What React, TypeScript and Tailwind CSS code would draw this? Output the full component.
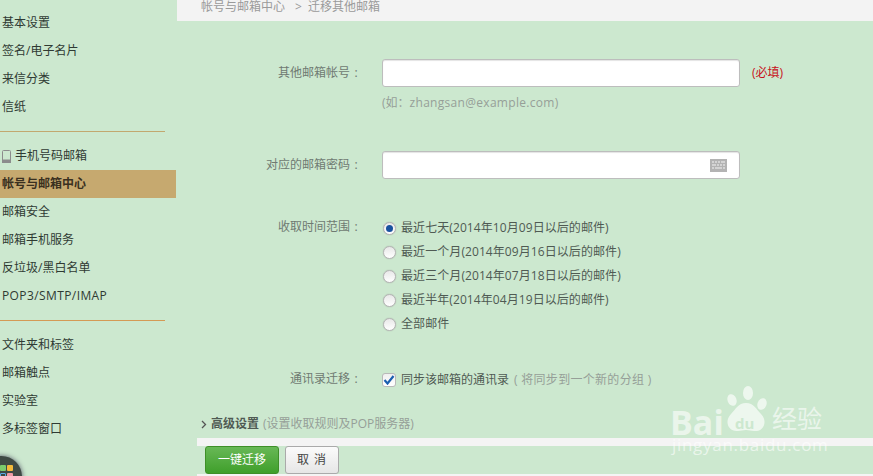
const font = "font-['Open_Sans','Noto_Sans_CJK_SC',sans-serif]";

function SideItem({ children, active }: { children: React.ReactNode; active?: boolean }) {
  return (
    <div className={`flex h-7 items-center pl-[2px] text-xs ${active ? "bg-[#c6a96f] font-bold text-[#3a3020]" : "text-[#2f3a33]"}`}>
      {children}
    </div>
  );
}

function FormRow({ label, tall, className, children }: { label: string; tall?: boolean; className: string; children: React.ReactNode }) {
  return (
    <div className={`flex ${className}`}>
      <div className={`mr-5 w-[185px] shrink-0 text-right text-xs text-[#6f7a72] ${tall ? "leading-[28px]" : "leading-[21px]"}`}>
        {label}
        <span className="inline-block w-3 text-center">:</span>
      </div>
      <div className="min-w-0 flex-1">{children}</div>
    </div>
  );
}

function Radio({ checked, label }: { checked?: boolean; label: string }) {
  return (
    <div className="flex h-6 items-center pl-px">
      <span className="flex h-[13px] w-[13px] items-center justify-center rounded-full border border-[#b5b5b5] bg-[linear-gradient(#e8e8e8,#ffffff)] shadow-[0_0_1px_#999]">
        {checked && <span className="h-[7px] w-[7px] rounded-full bg-[#19519f]" />}
      </span>
      <span className="ml-[5px] text-xs tracking-[0.08px] text-[#4f5a53]">{label}</span>
    </div>
  );
}

function KeyboardIcon() {
  return (
    <svg width="17" height="13" viewBox="0 0 17 13" className="absolute right-[12px] top-[7px]">
      <rect width="17" height="13" fill="#b3b3b3" />
      <path d="M2 3h2M5 3h2M8 3h2M11 3h4M2 6h4M7 6h2M10 6h2M13 6h2M2 9h2M5 9h7M13 9h2" stroke="#f4f4f4" strokeWidth="1" />
    </svg>
  );
}

function Paw() {
  return (
    <svg width="50" height="52" viewBox="0 0 50 52" fill="#ffffff" fillOpacity="0.65" className="absolute left-[51px] top-[2px]">
      <ellipse cx="11" cy="16" rx="4.5" ry="6" transform="rotate(-20 11 16)" />
      <ellipse cx="27" cy="9" rx="5" ry="7" />
      <ellipse cx="41" cy="20" rx="4.5" ry="6" transform="rotate(20 41 20)" />
      <path d="M25 19c8 0 10 6 15 11 7 7 3 18-7 17-3 0-5-1-8-1s-5 1-8 1C7 48 3 37 10 30c5-5 7-11 15-11Z" />
    </svg>
  );
}

export default function App() {
  return (
    <div className={`relative flex h-[476px] w-[873px] overflow-hidden bg-[#cce8cf] ${font}`}>
      <aside className="w-[177px] shrink-0 pt-[9px] pr-px">
        <SideItem>基本设置</SideItem>
        <SideItem>签名/电子名片</SideItem>
        <SideItem>来信分类</SideItem>
        <SideItem>信纸</SideItem>
        <div className="my-[10px] h-px w-[165px] bg-[#c2a86f]" />
        <SideItem>
          <svg width="9" height="13" viewBox="0 0 9 13" className="mr-1">
            <rect x="0.5" y="0.5" width="8" height="12" rx="1" fill="none" stroke="#8c8c8c" />
            <rect x="0" y="9.5" width="9" height="3.5" fill="#8c8c8c" />
          </svg>
          手机号码邮箱
        </SideItem>
        <SideItem active>帐号与邮箱中心</SideItem>
        <SideItem>邮箱安全</SideItem>
        <SideItem>邮箱手机服务</SideItem>
        <SideItem>反垃圾/黑白名单</SideItem>
        <SideItem><span className="tracking-[0.4px]">POP3/SMTP/IMAP</span></SideItem>
        <div className="my-[10px] h-px w-[165px] bg-[#d49a55]" />
        <SideItem>文件夹和标签</SideItem>
        <SideItem>邮箱触点</SideItem>
        <SideItem>实验室</SideItem>
        <SideItem>多标签窗口</SideItem>
      </aside>

      <main className="flex min-w-0 flex-1 flex-col">
        <div className="flex h-[21px] items-start bg-[#f3f3f3] pl-6 text-xs leading-[13px] text-[#9a9a9a]">
          帐号与邮箱中心<span className="ml-[10px] mr-[6px]">&gt;</span>迁移其他邮箱
        </div>

        <FormRow label="其他邮箱帐号" tall className="mt-[38px]">
          <div className="flex items-center">
            <div className="h-7 w-[358px] rounded-[3px] border border-[#bdbdbd] bg-white shadow-[inset_0_1px_1px_#e4e4e4]" />
            <span className="ml-3 text-xs text-[#c8101a]">(必填)</span>
          </div>
          <div className="mt-[6px] text-xs leading-5 text-[#969f98]">
            (如：<span className="tracking-[0.3px]">zhangsan@example.com)</span>
          </div>
        </FormRow>

        <FormRow label="对应的邮箱密码" tall className="mt-[38px]">
          <div className="relative h-7 w-[358px] rounded-[3px] border border-[#bdbdbd] bg-white shadow-[inset_0_1px_1px_#e4e4e4]">
            <KeyboardIcon />
          </div>
        </FormRow>

        <FormRow label="收取时间范围" className="mt-[37px]">
          <Radio checked label="最近七天(2014年10月09日以后的邮件)" />
          <Radio label="最近一个月(2014年09月16日以后的邮件)" />
          <Radio label="最近三个月(2014年07月18日以后的邮件)" />
          <Radio label="最近半年(2014年04月19日以后的邮件)" />
          <Radio label="全部邮件" />
        </FormRow>

        <FormRow label="通讯录迁移" className="mt-[32px]">
          <div className="flex h-6 items-center">
            <span className="flex h-[14px] w-[14px] items-center justify-center rounded-[3px] border border-[#b9b9b9] bg-[linear-gradient(#f0f0f0,#ffffff)]">
              <svg width="12" height="10" viewBox="0 0 12 10">
                <path d="M1.5 5 4.5 8.5 10.5 1" fill="none" stroke="#1b5fb0" strokeWidth="2.2" />
              </svg>
            </span>
            <span className="ml-[5px] text-xs text-[#4f5a53]">同步该邮箱的通讯录</span>
            <span className="ml-[5px] text-xs tracking-[0.3px] text-[#969f98]">( 将同步到一个新的分组 )</span>
          </div>
        </FormRow>

        <div className="mt-[22px] flex h-5 items-center pl-6 text-xs">
          <svg width="6" height="9" viewBox="0 0 6 9" className="mr-1">
            <path d="M1 1l3.5 3.5L1 8" fill="none" stroke="#555" strokeWidth="1.3" />
          </svg>
          <span className="font-bold text-[#4f5a53]">高级设置</span>
          <span className="ml-1 text-[#969f98]">(设置收取规则及POP服务器)</span>
        </div>

        <div className="ml-5 mt-1 flex-1 border-t-[8px] border-b-[2px] border-[#f4f4f4] bg-[#cce8cf]">
          <div className="ml-2 flex h-[28px] gap-[6px]">
            <button className="w-[74px] rounded-[3px] border border-[#3e8f28] bg-[linear-gradient(#68b856,#3f9f2b)] text-xs text-white">一键迁移</button>
            <button className="w-[54px] rounded-[3px] border border-[#aaaaaa] bg-[linear-gradient(#fbfbfb,#e6e6e6)] text-xs tracking-[1px] text-[#444]">取 消</button>
          </div>
        </div>
      </main>

      <div className="absolute -bottom-[24px] -left-[19px] h-[44px] w-[41px] rounded-full bg-[#3f4a44] shadow-[0_0_5px_#556]">
        <div className="ml-[19px] mt-[9px] grid w-[13px] grid-cols-2 gap-x-px gap-y-[2px]">
          <span className="h-[6px] rounded-[1px] bg-[#7ccb6c]" />
          <span className="h-[6px] rounded-[1px] bg-[#f4b93a]" />
          <span className="h-[6px] rounded-[1px] border border-[#5aa9e6]" />
          <span className="h-[6px] rounded-[1px] bg-[#ef9aa5]" />
        </div>
      </div>

      <div className="pointer-events-none absolute left-[670px] top-[382px] h-[90px] w-[180px] text-white/60">
        <Paw />
        <span className="absolute left-0 top-[20px] text-[34px] font-bold leading-[40px]">Bai</span>
        <span className="absolute left-[65px] top-[32px] text-[15px] font-bold leading-[18px] text-[#cce8cf]">du</span>
        <span className="absolute left-[102px] top-[22px] text-[25px] leading-[28px]">经验</span>
        <span className="absolute left-[2px] top-[53px] text-[17px] leading-[20px] tracking-[0.7px]">jingyan.baidu.com</span>
      </div>
    </div>
  );
}
